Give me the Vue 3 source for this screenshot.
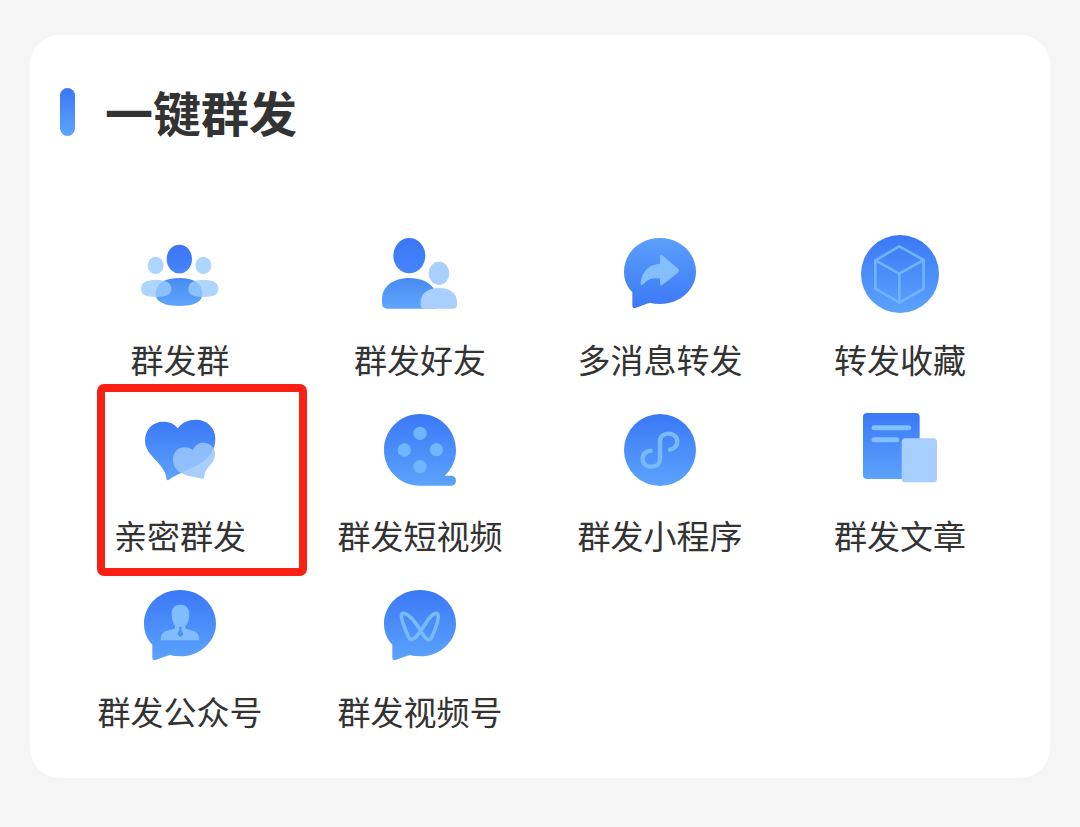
<script setup>
const items = [
  { id: 'groups', label: '群发群', box: '0 0 300 270' },
  { id: 'friends', label: '群发好友', box: '0 0 300 270' },
  { id: 'forward', label: '多消息转发', box: '0 0 300 270' },
  { id: 'favorites', label: '转发收藏', box: '0 6 300 270' },
  { id: 'close', label: '亲密群发', box: '0 0 300 270', marked: true },
  { id: 'video', label: '群发短视频', box: '0 3 300 270' },
  { id: 'mini', label: '群发小程序', box: '0 3 300 270' },
  { id: 'article', label: '群发文章', box: '0 3 300 270' },
  { id: 'official', label: '群发公众号', box: '0 6 300 270' },
  { id: 'channel', label: '群发视频号', box: '0 6 300 270' }
]
</script>

<template>
  <main class="page">
    <svg class="defs" width="0" height="0" aria-hidden="true">
      <defs>
        <linearGradient id="blue" x1="0" y1="0" x2="0" y2="1">
          <stop offset="0" stop-color="#3b78f6" />
          <stop offset="1" stop-color="#5ba3fc" />
        </linearGradient>
        <linearGradient id="head" x1="0" y1="0" x2="0" y2="1">
          <stop offset="0" stop-color="#3b76f5" />
          <stop offset="1" stop-color="#4585fb" />
        </linearGradient>
        <linearGradient id="body" x1="0" y1="0" x2="0" y2="1">
          <stop offset="0" stop-color="#488af0" />
          <stop offset="1" stop-color="#5ea6fc" />
        </linearGradient>
        <linearGradient id="rise" x1="0" y1="0" x2="0" y2="1">
          <stop offset="0" stop-color="#5b9ffa" />
          <stop offset="1" stop-color="#3c78f8" />
        </linearGradient>
      </defs>
    </svg>
    <section class="card">
      <header class="head">
        <span class="bar"></span>
        <h1 class="title">一键群发</h1>
      </header>
      <div class="grid">
        <button v-for="item in items" :key="item.id" type="button" class="item">
          <svg class="icon" :viewBox="item.box" aria-hidden="true">
            <g v-if="item.id === 'groups'">
              <ellipse cx="148" cy="87" rx="38" ry="43" fill="url(#head)" />
              <path d="M77 192C77 160 105 144 148 144S217 160 217 192C217 217 190 228 148 228S77 217 77 192Z" fill="url(#body)" />
              <g fill="#9acbfc" fill-opacity=".8">
                <ellipse cx="77" cy="106" rx="24" ry="26" />
                <ellipse cx="220" cy="106" rx="24" ry="26" />
                <path d="M33 178C33 157 49 150 78 150S124 157 124 178C124 195 108 201 78 201S33 195 33 178Z" />
                <path d="M175 178C175 157 191 150 220 150S265 157 265 178C265 195 249 201 220 201S175 195 175 178Z" />
              </g>
            </g>
            <g v-else-if="item.id === 'friends'">
              <ellipse cx="118" cy="77" rx="48" ry="53" fill="url(#head)" />
              <path d="M51 236Q36 236 36 220V207C36 170 69 144 117 144C150 144 176 155 190 174L198 236Z" fill="url(#body)" />
              <g fill="#a9d0fd">
                <ellipse cx="207" cy="130" rx="31" ry="35" />
                <path d="M163 236Q152 236 152 225V216C152 190 174 174 207 174S261 190 261 216V225Q261 236 250 236Z" />
              </g>
            </g>
            <g v-else-if="item.id === 'forward'">
              <path d="M67 187C50 169 42 149 42 126C42 68 90 24 150 24S258 68 258 126C258 178 210 222 151 222Q133 222 119 218L76 234Q67 237 67 226Z" fill="url(#rise)" />
              <path d="M150 80Q150 72 157 76L205 117Q210 122 205 127L157 165Q150 169 150 160V145C126 143 111 148 101 162Q91 171 92 157C96 121 121 103 150 101Z" fill="#84bffd" />
            </g>
            <g v-else-if="item.id === 'favorites'">
              <circle cx="150" cy="138" r="117" fill="url(#blue)" />
              <path d="M148 55L221 96V182L148 224L76 182V97ZM76 97L148 137L221 96M148 137V224" fill="none" stroke="#70b3ff" stroke-width="8" stroke-linejoin="round" />
            </g>
            <g v-else-if="item.id === 'close'">
              <path d="M143 67C154 50 175 41 198 41C231 41 256 65 256 98C256 132 238 158 202 178C172 194 138 206 117 221Q110 226 109 215C106 191 87 174 69 154C53 136 45 122 45 103C45 71 68 47 100 47C120 47 134 54 143 67Z" fill="url(#blue)" />
              <path d="M188 132C194 118 206 110 220 110C241 110 255 125 255 144C255 162 246 171 235 184C226 194 224 205 222 215Q221 220 215 218C196 212 172 212 152 200C137 191 129 177 129 161C129 140 143 124 162 124C173 124 182 126 188 132Z" fill="#9bc5fc" fill-opacity=".85" />
            </g>
            <g v-else-if="item.id === 'video'">
              <path d="M150 27C210 27 258 75 258 135C258 166 246 191 224 212H244Q258 214 258 227T244 242H150C90 242 42 195 42 135S90 27 150 27Z" fill="url(#blue)" />
              <g fill="#6fb5ff">
                <circle cx="150" cy="85" r="20" />
                <circle cx="103" cy="135" r="20" />
                <circle cx="199" cy="134" r="20" />
                <circle cx="150" cy="185" r="20" />
              </g>
            </g>
            <g v-else-if="item.id === 'mini'">
              <circle cx="150" cy="135" r="108" fill="url(#blue)" />
              <path d="M122 137C106 140 98 150 98 161C98 176 110 185 124 185C139 185 150 176 150 161V109C150 95 161 86 176 86C191 86 202 96 202 110C202 122 194 130 180 134" fill="none" stroke="#78b9ff" stroke-width="13" stroke-linecap="round" />
            </g>
            <g v-else-if="item.id === 'article'">
              <rect x="39" y="24" width="170" height="198" rx="12" fill="url(#blue)" />
              <path d="M72 68H176M72 104H140" stroke="#80c0ff" stroke-width="15" stroke-linecap="round" />
              <rect x="155" y="100" width="106" height="132" rx="11" fill="#a6cfff" />
            </g>
            <g v-else>
              <path d="M67 194C50 176 42 154 42 131C42 74 90 30 150 30S258 74 258 131C258 184 210 229 151 229Q133 229 119 225L76 240Q67 243 67 232Z" fill="url(#blue)" />
              <template v-if="item.id === 'official'">
                <path d="M125 101C125 84 134 74 151 74S178 84 178 101C178 117 174 130 166 138V144C173 150 188 150 198 156Q207 162 208 181H92Q93 162 102 156C112 150 128 150 135 144V137C129 130 125 117 125 101Z" fill="#80bdff" />
                <path d="M146 141H156L154 148L160 163L151 172L142 163L149 148Z" fill="#4c91f8" />
              </template>
              <path v-else d="M150 150C142 133 115 98 99 100C86 103 103 142 114 168C119 180 126 182 134 174C148 162 158 145 167 130C179 110 193 99 200 100C212 104 199 142 187 168C182 180 176 183 168 175C160 168 156 158 150 150Z" fill="none" stroke="#78bafd" stroke-width="11" stroke-linejoin="round" />
            </g>
          </svg>
          <span class="label">{{ item.label }}</span>
          <span v-if="item.marked" class="mark"></span>
        </button>
      </div>
    </section>
  </main>
</template>

<style>
body {
  margin: 0;
  background: #f5f5f5;
}
</style>

<style scoped>
.page {
  padding: 35px 30px 49px;
  font-family: "Noto Sans CJK SC", sans-serif;
  color: #333;
}
.defs {
  position: absolute;
}
.card {
  padding: 53px 30px 47px;
  border-radius: 30px;
  background: #fff;
}
.head {
  display: flex;
  align-items: flex-start;
  gap: 30px;
}
.bar {
  width: 15px;
  height: 48px;
  border-radius: 8px;
  background: linear-gradient(#3b76f5, #5ba5ff);
}
.title {
  margin: 0;
  font-size: 48px;
  line-height: 46px;
  font-weight: 700;
}
.grid {
  display: grid;
  grid-template-columns: repeat(4, 1fr);
  row-gap: 27px;
  margin-top: 94px;
}
.item {
  position: relative;
  display: flex;
  flex-direction: column;
  align-items: center;
  gap: 19px;
  padding: 0;
  border: 0;
  background: none;
  color: inherit;
  font-family: inherit;
  cursor: pointer;
}
.icon {
  width: 100px;
  height: 90px;
}
.label {
  font-size: 33px;
  line-height: 40px;
  white-space: nowrap;
}
.mark {
  position: absolute;
  top: -22px;
  left: 37px;
  box-sizing: border-box;
  width: 210px;
  height: 192px;
  border: 8px solid #fb2014;
  border-radius: 7px;
}
</style>
